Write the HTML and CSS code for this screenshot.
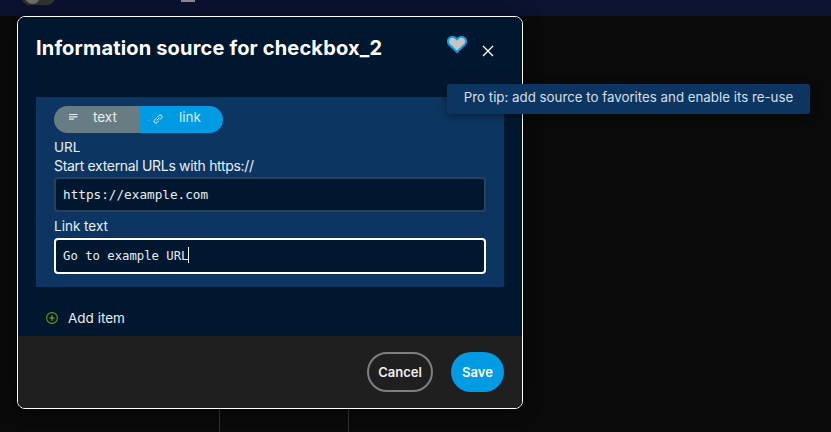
FILE: index.html
```html
<!DOCTYPE html>
<html lang="en">
<head>
<meta charset="utf-8">
<title>Information source</title>
<link rel="stylesheet" href="styles.css">
</head>
<body>
<div class="topbar">
  <span class="toggle"><span class="knob"></span></span>
  <span class="topmark"></span>
</div>
<span class="line line-a"></span>
<span class="line line-b"></span>
<section class="modal">
  <div class="body">
    <header class="head">
      <h1 class="title">Information source for checkbox_2</h1>
      <svg class="heart" width="20" height="19" viewBox="0 0 22 20"><path d="M11 18.2 2.6 10.2C.3 7.9.6 4.6 2.7 2.9 4.9 1.2 8.400 1.300 11 4.200 13.600 1.300 17.100 1.200 19.300 2.900 21.400 4.600 21.700 7.900 19.400 10.200Z" fill="#c4c4c4" stroke="#0d9be0" stroke-width="2.200"/></svg>
      <svg class="close" width="12" height="12" viewBox="0 0 12 12"><path d="M1 1 11 11M11 1 1 11" stroke="#fff" stroke-width="1.400" fill="none"/></svg>
    </header>
    <div class="panel">
      <div class="segment">
        <div class="seg seg-text">
          <svg width="9" height="6" viewBox="0 0 9 6"><path d="M0 .5H8.500M0 2.800H8.500M0 5.200H5" stroke="#e6eaec" stroke-width="1.200"/></svg>
          <span>text</span>
        </div>
        <div class="seg seg-link">
          <svg width="10" height="10" viewBox="0 0 10 10"><path d="M4.300 3.200 5.900 1.600C6.700.8 7.800.8 8.500 1.500 9.200 2.200 9.200 3.300 8.400 4.100L6.800 5.700M5.700 6.800 4.100 8.400C3.300 9.200 2.200 9.200 1.500 8.500.8 7.800.8 6.700 1.600 5.900L3.200 4.300M3.600 6.400 6.400 3.600" stroke="#e8f5fc" stroke-width="1" fill="none"/></svg>
          <span>link</span>
        </div>
      </div>
      <label class="label label-url">URL</label>
      <p class="hint">Start external URLs with https://</p>
      <div class="input input-url">https://example.com</div>
      <label class="label label-link">Link text</label>
      <div class="input input-focus">Go to example URL<span class="caret"></span></div>
    </div>
    <div class="add">
      <svg width="12" height="12" viewBox="0 0 12 12"><circle cx="6" cy="6" r="5.400" fill="none" stroke="#6f9a0e" stroke-width="1.100"/><path d="M3.300 6H8.700M6 3.300V8.700" stroke="#7fae12" stroke-width="1.200"/></svg>
      <span>Add item</span>
    </div>
  </div>
  <footer class="foot">
    <button class="btn btn-cancel">Cancel</button>
    <button class="btn btn-save">Save</button>
  </footer>
</section>
<div class="tooltip">Pro tip: add source to favorites and enable its re-use</div>
</body>
</html>
```
FILE: styles.css
```css
* { box-sizing: border-box; }
html, body { margin: 0; height: 100%; }
body {
  position: relative;
  width: 831px;
  height: 432px;
  overflow: hidden;
  background: #0a0a0a;
  font-family: "Inter", "Noto Sans", sans-serif;
  color: #fff;
}
.topbar {
  height: 16px;
  background: #0b1331;
  position: relative;
}
.toggle {
  position: absolute;
  left: 22px;
  top: -10px;
  width: 33px;
  height: 15px;
  border-radius: 8px;
  background: #2e3330;
}
.knob {
  position: absolute;
  left: 3px;
  top: -1px;
  width: 15px;
  height: 15px;
  border-radius: 50%;
  background: #6d6d6d;
}
.topmark {
  position: absolute;
  left: 181px;
  top: 0;
  width: 14px;
  height: 2px;
  background: #8a8a8a;
}
.line {
  position: absolute;
  top: 408px;
  width: 1px;
  height: 24px;
  background: #2a3236;
}
.line-a { left: 219px; }
.line-b { left: 348px; }
.modal {
  position: absolute;
  left: 17px;
  top: 16px;
  width: 506px;
  height: 393px;
  border: 1px solid #fff;
  border-radius: 8px;
  overflow: hidden;
  display: flex;
  flex-direction: column;
  box-shadow: 0 0 16px rgba(0, 0, 0, .5);
}
.body {
  flex: 1;
  background: #00182f;
  padding: 0 18px;
  display: flex;
  flex-direction: column;
}
.head {
  height: 80px;
  display: flex;
  align-items: flex-start;
  position: relative;
}
.title {
  margin: 18px 0 0 0;
  font-size: 20px;
  line-height: 26px;
  font-weight: 700;
  letter-spacing: .17px;
}
.heart { position: absolute; left: 411px; top: 18px; }
.close { position: absolute; left: 446px; top: 28px; }
.panel {
  height: 190px;
  background: #0c3661;
  padding: 9px 18px 0;
  display: flex;
  flex-direction: column;
}
.segment {
  display: flex;
  width: 169px;
  height: 27px;
  border-radius: 14px;
  overflow: hidden;
  font-size: 13.500px;
}
.seg {
  height: 100%;
  display: flex;
  align-items: flex-start;
  padding-top: 2px;
  line-height: 18px;
}
.seg-text { width: 85px; background: #687c83; color: #e8eef0; padding-left: 15px; gap: 15px; }
.seg-link { width: 84px; background: #009be3; color: #d9f0fb; padding-left: 14px; gap: 16px; }
.seg svg { margin-top: 6px; }
.label { display: block; font-size: 13.500px; line-height: 20px; color: #e9eef3; }
.label-url { margin-top: 4px; }
.hint { margin: -1px 0 0; font-size: 14px; line-height: 20px; color: #e9eef3; letter-spacing: -.32px; }
.label-link { margin-top: 4px; }
.input {
  width: 432px;
  height: 35px;
  border-radius: 4px;
  background: #00182f;
  font-family: "DejaVu Sans Mono", monospace;
  padding: 0 7px;
  color: #e8edf2;
}
.input-url { border: 2px solid #2c4157; margin-top: 1px; font-size: 12.700px; line-height: 31px; }
.input-focus { border: 2px solid #fff; height: 36px; margin-top: 2px; font-size: 12.250px; line-height: 33px; }
.caret {
  display: inline-block;
  width: 1px;
  height: 16px;
  background: #fff;
  vertical-align: -3px;
}
.add {
  display: flex;
  align-items: center;
  gap: 10px;
  margin: 21px 0 0 10px;
  font-size: 13.500px;
  line-height: 20px;
  color: #e9eef3;
}
.foot {
  height: 72px;
  background: #1f1f1f;
  display: flex;
  justify-content: flex-end;
  align-items: flex-start;
  gap: 18px;
  padding: 16px 18px 0 0;
}
.btn {
  height: 40px;
  border-radius: 20px;
  font-family: inherit;
  font-size: 13px;
  font-weight: 600;
  color: #fff;
  padding: 0;
}
.btn-cancel { width: 66px; background: transparent; border: 2px solid #7f7f7f; color: #eee; }
.btn-save { width: 53px; background: #009be3; border: 0; }
.tooltip {
  position: absolute;
  left: 447px;
  top: 84px;
  width: 363px;
  height: 30px;
  border-radius: 3px;
  background: #0c3661;
  color: #d5dfe9;
  font-size: 13.300px;
  line-height: 26px;
  text-align: center;
  box-shadow: 0 2px 8px rgba(0, 0, 0, .4);
}
```
